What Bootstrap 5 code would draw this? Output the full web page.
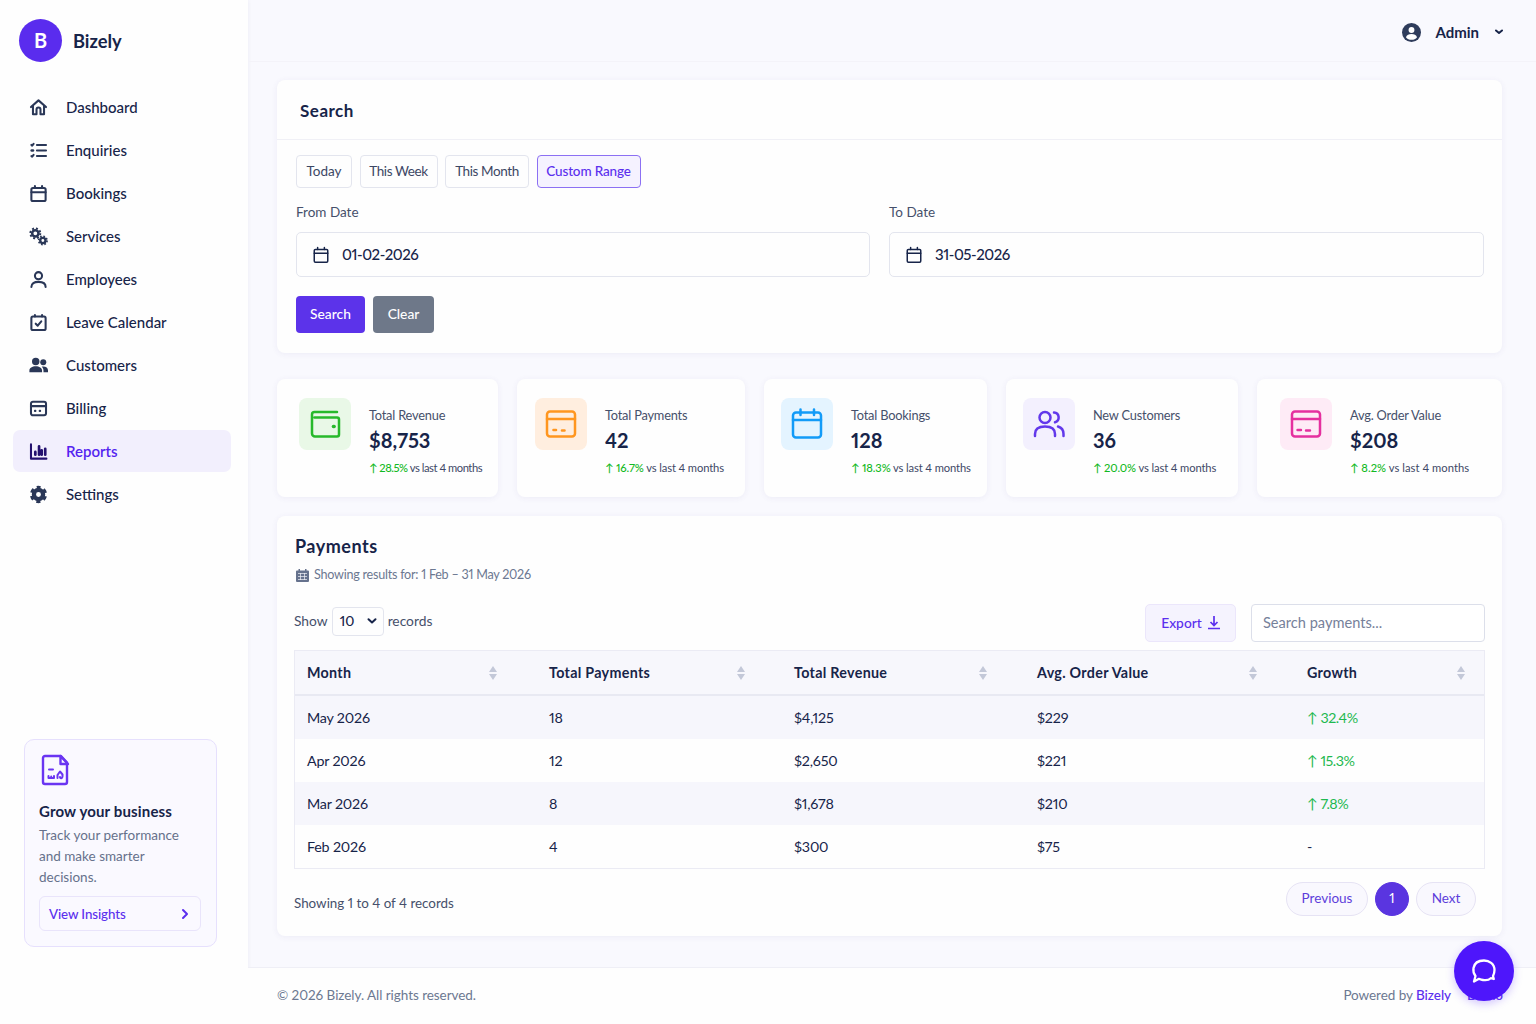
<!DOCTYPE html>
<html lang="en">
<head>
  <meta charset="UTF-8" />
  <meta name="viewport" content="width=device-width, initial-scale=1" />
  <title>Bizely - Reports</title>
  <link href="https://cdn.jsdelivr.net/npm/bootstrap@5.3.0/dist/css/bootstrap.min.css" rel="stylesheet" />
  <style>
    :root {
      --ink: #172449;
      --ink-soft: #46506b;
      --muted: #6c7891;
      --brand: #5b2fee;
      --line: #e3e5ee;
    }
    body {
      background-color: #f9f9fe;
      color: var(--ink);
      font-family: Lato, 'Liberation Sans', sans-serif;
      font-size: 15px;
      font-variant-numeric: proportional-nums;
      line-height: 1.4;
      height: 1024px;
      overflow: hidden;
    }
    svg { display: block; flex: none; }
    .ico { fill: none; stroke: currentColor; stroke-width: 2; stroke-linecap: round; stroke-linejoin: round; }

    /* sidebar */
    .sidebar { width: 248px; background: #fefefe; box-shadow: 0 0 4px rgba(60,50,120,.07); padding: 19px 17px 77px 13px; }
    .brand-logo { width: 43px; height: 43px; background: #5a2cee; font-size: 20px; margin-left: 6px; padding-bottom: 1px; }
    .brand-name { font-size: 18.3px; font-weight: 700; padding-top: 2px; margin-left: 11px; }
    .side-menu { margin-top: 24px; gap: 1px; }
    .side-menu .nav-link { height: 42px; border-radius: 7px; padding: 0 16px; gap: 18px; color: var(--ink); font-weight: 500; }
    .side-menu .nav-link svg { color: #2a3757; stroke-width: 2.6; }
    .side-menu .nav-link.active { background: #f2effd; color: #5424f0; font-weight: 600; }
    .side-menu .nav-link.active svg { color: #24116f; }
    .promo { width: 193px; height: 208px; border: 1px solid #e6e0fd; border-radius: 10px; background: #faf9ff; padding: 13px 15px 13px 14px; margin-left: 11px; }
    .promo > svg { color: #6a35f2; stroke-width: 2.4; }
    .promo-title { font-weight: 700; font-size: 15px; letter-spacing: .15px; margin-top: 14px; line-height: 21px; }
    .promo-text { font-size: 13.5px; line-height: 21px; color: #66718b; margin-top: 3px; }
    .promo-link { height: 35px; border: 1px solid #e9e4fb; border-radius: 6px; padding: 1px 10px 0 9px; color: var(--brand); font-size: 13.3px; letter-spacing: -.1px; font-weight: 500; margin-top: 8px; }

    /* page */
    .topbar { height: 62px; border-bottom: 1px solid #f4f3f9; padding: 3px 33px 0 0; }
    .topbar-user { font-weight: 700; font-size: 15px; margin-left: 14px; }
    .content { padding: 18px 34px 0 29px; }
    .panel { background: #fefefe; border-radius: 8px; box-shadow: 0 1px 6px rgba(70,60,140,.07); }
    .panel-head { height: 60px; border-bottom: 1px solid #f0f0f6; padding: 2px 23px 0; font-size: 17px; font-weight: 700; letter-spacing: .5px; }
    .search-panel { height: 273px; }
    .search-body { padding: 15px 18px 15px 19px; }
    .range-row { gap: 7.5px; }
    .btn-range { height: 33px; padding: 0; width: 56px; border: 1px solid var(--line); border-radius: 4px; font-size: 13.5px; line-height: 31px; color: #3c4764; }
    .btn-range.week { width: 78px; letter-spacing: -.4px; }
    .btn-range.month { width: 84px; letter-spacing: -.4px; }
    .btn-range.active { width: 104px; letter-spacing: -.15px; border-color: #8c70f3; background: #f5f2ff; color: var(--brand); font-weight: 500; }
    .date-row { display: grid; grid-template-columns: 574px 595px; gap: 19px; margin-top: 14px; }
    .date-row label { font-size: 13.5px; line-height: 20px; color: var(--ink-soft); margin-bottom: 10px; }
    .date-field { height: 45px; border: 1px solid var(--line); border-radius: 5px; padding: 0 15px; gap: 12px; font-weight: 500; letter-spacing: -.45px; }
    .action-row { margin-top: 19px; }
    .btn-go { width: 69px; height: 37px; border-radius: 4px; padding: 0; color: #fff; font-size: 13.8px; font-weight: 500; border: 0; background: #5c33ea; }
    .btn-go.alt { width: 61px; background: #6e7889; }

    .stats { display: grid; grid-template-columns: 221px 228px 223px 232px 245px; gap: 19px; margin: 26px 0 19px; }
    .stat { height: 118px; padding-top: 19px; gap: 18px; }
    .stat-icon { width: 52px; height: 52px; border-radius: 8px; flex: none; }
    .stat-icon svg { stroke-width: 2.5; }
    .stat-label { font-size: 12.8px; letter-spacing: -.2px; line-height: 18px; color: var(--ink-soft); margin-top: 8px; }
    .stat-value { font-size: 20px; line-height: 26px; font-weight: 700; margin-top: 3px; }
    .stat-note { font-size: 11.2px; letter-spacing: -.12px; line-height: 16px; color: #3f4967; margin-top: 7px; white-space: nowrap; }
    .stat-note.snug { letter-spacing: -.46px; }
    .stat-note.wide { letter-spacing: .05px; }
    .up { color: #1fb943; }
    .stat-note .up { font-weight: 500; color: #12b923; }

    .pay-panel { height: 420px; padding: 18px 17px 0; }
    .pay-title { font-size: 18px; font-weight: 700; letter-spacing: .5px; line-height: 25px; padding-left: 1px; }
    .pay-sub { font-size: 12.6px; letter-spacing: -.25px; color: var(--muted); line-height: 18px; margin-top: 7px; padding-left: 2px; }
    .pay-sub span { margin-left: 5px; }
    .pay-tools { margin-top: 20px; height: 38px; }
    .len-select { width: 52px; height: 29px; border: 1px solid var(--line); border-radius: 4px; padding: 0 6px 0 7px; color: var(--ink); font-weight: 500; }
    .len-label { font-size: 13.8px; color: var(--ink-soft); }
    .btn-export { width: 91px; height: 38px; border: 1px solid #ebe6fb; border-radius: 5px; background: #f5f3fe; color: var(--brand); font-size: 13.8px; font-weight: 500; margin-right: 15px; }
    .btn-export svg { margin-left: 6px; }
    .pay-search { width: 234px; height: 38px; border: 1px solid #dcdfea; border-radius: 4px; padding: 0 11px 2px; font-size: 14.6px; color: var(--ink); background: #fff; }
    .pay-search::placeholder { color: #76819a; opacity: 1; }
    .pay-table { width: 1191px; table-layout: fixed; margin: 8px 0 0; border: 1px solid #ebebf4; border-collapse: separate; border-spacing: 0; --bs-table-bg: transparent; }
    .pay-table th, .pay-table td { height: 43px; padding: 1px 12px 0; vertical-align: middle; border: 0; color: var(--ink); font-size: 14.3px; letter-spacing: -.2px; line-height: 20px; }
    .pay-table thead th { height: 45px; padding: 0 12px; background: #f7f7fc; border-bottom: 2px solid #e8e9f2; font-weight: 700; letter-spacing: .3px; }
    .pay-table tbody tr:nth-child(odd) td { background: #f6f6fc; }
    .pay-table td.up { color: #1fb950; letter-spacing: -.5px; }
    .pay-foot { margin-top: 13px; }
    .pay-foot .info { font-size: 13.4px; color: var(--ink-soft); padding-top: 8px; }
    .pager { gap: 7px; padding-right: 9px; }
    .pager .page-item .page-link { height: 34px; margin: 0; border: 1px solid #e6e3f4; border-radius: 17px; background: #f9f8fe; color: #5d3edb; font-size: 13.5px; line-height: 31px; padding: 0; text-align: center; }
    .pager .page-item.active .page-link { background: #5a35e0; border-color: #5a35e0; color: #fff; }

    .footer-bar { height: 57px; border-top: 1px solid #efeff6; background: #fefefe; padding: 0 33px 2px 29px; color: var(--muted); font-size: 13.5px; letter-spacing: -.05px; }
    .footer-bar a { color: var(--brand); text-decoration: none; font-weight: 500; }
    .chat-btn { position: fixed; left: 1454px; top: 941px; width: 60px; height: 60px; border-radius: 50%; background: #4e16fb; box-shadow: 0 3px 8px rgba(80,30,250,.25); }
    .chat-btn svg { stroke-width: 2.3; }
  </style>
</head>
<body>
  <div class="d-flex h-100">
    <aside class="sidebar d-flex flex-column flex-shrink-0">
      <div class="d-flex align-items-center">
        <div class="brand-logo rounded-circle text-white fw-bold d-flex align-items-center justify-content-center">B</div>
        <span class="brand-name">Bizely</span>
      </div>
      <nav class="side-menu nav flex-column">
        <a class="nav-link d-flex align-items-center" href="#">
          <svg class="ico" width="19" height="19" viewBox="0 0 24 24"><path d="M2.500 11.500 12 3l9.500 8.500M5 9.800V20.500h4.500v-6a2.500 2.500 0 0 1 5 0v6H19V9.800"/></svg>
          <span>Dashboard</span></a>
        <a class="nav-link d-flex align-items-center" href="#">
          <svg class="ico" width="19" height="19" viewBox="0 0 24 24"><path d="M10 5h11.500M10 12h11.500M10 19h11.500M3 5l1 .8 1.800-2.300M3 19l1 .8 1.800-2.300"/><path d="M3.500 12h1.500" stroke-width="3.400"/></svg>
          <span>Enquiries</span></a>
        <a class="nav-link d-flex align-items-center" href="#">
          <svg class="ico" width="19" height="19" viewBox="0 0 24 24"><rect x="3" y="5" width="18" height="16.500" rx="2"/><path d="M3 10.500h18M7.500 2.500V5M16.500 2.500V5"/></svg>
          <span>Bookings</span></a>
        <a class="nav-link d-flex align-items-center" href="#">
          <svg class="ico" width="19" height="19" viewBox="0 0 24 24"><g stroke-linecap="butt"><circle cx="8" cy="8" r="4" stroke-width="3.200"/><circle cx="8" cy="8" r="6.300" stroke-width="2.400" stroke-dasharray="2.500 2.450"/><circle cx="17.500" cy="17" r="3.300" stroke-width="3"/><circle cx="17.500" cy="17" r="5.300" stroke-width="2.200" stroke-dasharray="2.100 2.060"/></g></svg>
          <span>Services</span></a>
        <a class="nav-link d-flex align-items-center" href="#">
          <svg class="ico" width="19" height="19" viewBox="0 0 24 24"><circle cx="12" cy="7.200" r="4.500"/><path d="M3 21.500c0-4.500 3.500-6.500 9-6.500s9 2 9 6.500"/></svg>
          <span>Employees</span></a>
        <a class="nav-link d-flex align-items-center" href="#">
          <svg class="ico" width="19" height="19" viewBox="0 0 24 24"><rect x="3" y="4.500" width="18" height="17" rx="2"/><path d="M7.500 2.500v2M16.500 2.500v2M8.500 13.500l2.500 2.500 4.500-5.500"/></svg>
          <span>Leave Calendar</span></a>
        <a class="nav-link d-flex align-items-center" href="#">
          <svg width="19" height="19" viewBox="0 0 24 24" fill="currentColor"><circle cx="8.500" cy="7" r="4.700"/><circle cx="18" cy="7.800" r="3.800"/><path d="M.5 20.500v-2C.5 15 4 13 8.500 13S16.500 15 16.500 18.500v2zM18.300 20.500v-2c0-2-.8-3.900-2.200-5 4.800-.7 7.900 1.200 7.900 4.500v2.500z"/></svg>
          <span>Customers</span></a>
        <a class="nav-link d-flex align-items-center" href="#">
          <svg class="ico" width="19" height="19" viewBox="0 0 24 24"><rect x="2.500" y="3.500" width="19" height="17" rx="2.500"/><path d="M2.500 9h19"/><path d="M7.500 15h.6M13.500 15h.6" stroke-width="2.600"/></svg>
          <span>Billing</span></a>
        <a class="nav-link active d-flex align-items-center" href="#">
          <svg class="ico" width="19" height="19" viewBox="0 0 24 24"><path d="M2.500 3v18H22"/><path d="M8 12.500V16M12.700 5.500V16M16 10.500V16M20.500 8.500V16" stroke-width="3.400"/></svg>
          <span>Reports</span></a>
        <a class="nav-link d-flex align-items-center" href="#">
          <svg class="ico" width="19" height="19" viewBox="0 0 24 24"><g stroke-linecap="butt"><circle cx="12" cy="12" r="5.800" stroke-width="5.400"/><circle cx="12" cy="12" r="9.200" stroke-width="3.400" stroke-dasharray="5.200 4.434" stroke-dashoffset="2.600" transform="rotate(-90 12 12)"/></g></svg>
          <span>Settings</span></a>
      </nav>
      <div class="promo mt-auto">
        <svg class="ico" width="32" height="34" viewBox="0 0 32 34"><path d="M22 3H6a2 2 0 0 0-2 2v24a2 2 0 0 0 2 2h20a2 2 0 0 0 2-2V9.500z"/><path d="M21.500 3v8H29z"/><path d="M10 16.500h4M9.500 23v2h5.500v-2M12.200 23.500v1.500M18.500 25v-3l2.500-3.500 2.500 3v2c0 1.800-2.500 2.500-2.500.5" stroke-width="2"/></svg>
        <div class="promo-title">Grow your business</div>
        <div class="promo-text">Track your performance<br>and make smarter<br>decisions.</div>
        <a class="promo-link d-flex align-items-center justify-content-between text-decoration-none" href="#">View Insights
          <svg class="ico" width="10" height="12" viewBox="0 0 10 12"><path d="M3 2l4 4-4 4"/></svg></a>
      </div>
    </aside>

    <div class="d-flex flex-column flex-grow-1">
      <header class="topbar d-flex align-items-center justify-content-end">
        <svg width="19" height="19" viewBox="0 0 24 24"><circle cx="12" cy="12" r="12" fill="#2f3c5b"/><circle cx="12" cy="8.800" r="3.700" fill="#fff"/><path d="M5 18c1-3 3.500-4 7-4s6 1 7 4c-1.800 2.200-4 3.200-7 3.200S6.800 20.200 5 18z" fill="#fff"/></svg>
        <span class="topbar-user">Admin</span>
        <svg class="ico ms-3" width="8" height="6" viewBox="0 0 8 6"><path d="M1 1.500l3 2.500 3-2.500"/></svg>
      </header>

      <main class="content flex-grow-1">
        <section class="panel search-panel">
          <div class="panel-head d-flex align-items-center">Search</div>
          <div class="search-body">
            <div class="range-row d-flex">
              <button class="btn btn-range">Today</button>
              <button class="btn btn-range week">This Week</button>
              <button class="btn btn-range month">This Month</button>
              <button class="btn btn-range active">Custom Range</button>
            </div>
            <div class="date-row">
              <div>
                <label class="d-block">From Date</label>
                <div class="date-field d-flex align-items-center">
                  <svg class="ico" width="18" height="18" viewBox="0 0 24 24"><rect x="3" y="4.500" width="18" height="17" rx="1.500"/><path d="M3 9.500h18M7.500 2v2.500M16.500 2v2.500"/></svg>
                  <span>01-02-2026</span>
                </div>
              </div>
              <div>
                <label class="d-block">To Date</label>
                <div class="date-field d-flex align-items-center">
                  <svg class="ico" width="18" height="18" viewBox="0 0 24 24"><rect x="3" y="4.500" width="18" height="17" rx="1.500"/><path d="M3 9.500h18M7.500 2v2.500M16.500 2v2.500"/></svg>
                  <span>31-05-2026</span>
                </div>
              </div>
            </div>
            <div class="action-row d-flex gap-2">
              <button class="btn btn-go">Search</button>
              <button class="btn btn-go alt">Clear</button>
            </div>
          </div>
        </section>

        <section class="stats">
          <div class="panel stat d-flex" style="padding-left: 22px">
            <div class="stat-icon d-flex align-items-center justify-content-center" style="background: #e9f8e7; color: #27b92b">
              <svg class="ico" width="32" height="32" viewBox="0 0 32 32"><path d="M28 4H5.500A2.500 2.500 0 0 0 3 6.500v19a3 3 0 0 0 3 3h22a2 2 0 0 0 2-2v-15a2 2 0 0 0-2-2H5.500"/><path d="M24.500 18.500h.6" stroke-width="3.600"/></svg>
            </div>
            <div>
              <div class="stat-label">Total Revenue</div>
              <div class="stat-value">$8,753</div>
              <div class="stat-note snug"><span class="up">↑ 28.5%</span> vs last 4 months</div>
            </div>
          </div>
          <div class="panel stat d-flex" style="padding-left: 18px">
            <div class="stat-icon d-flex align-items-center justify-content-center" style="background: #ffeedf; color: #ff961f">
              <svg class="ico" width="32" height="32" viewBox="0 0 32 32"><rect x="2" y="3.500" width="28" height="25" rx="3"/><path d="M2 11h28"/><path d="M8.500 22H11M17 22.500h2.500" stroke-width="2.600"/></svg>
            </div>
            <div>
              <div class="stat-label">Total Payments</div>
              <div class="stat-value">42</div>
              <div class="stat-note"><span class="up">↑ 16.7%</span> vs last 4 months</div>
            </div>
          </div>
          <div class="panel stat d-flex" style="padding-left: 17px">
            <div class="stat-icon d-flex align-items-center justify-content-center" style="background: #e4f4ff; color: #129bf8">
              <svg class="ico" width="32" height="32" viewBox="0 0 32 32"><rect x="2" y="4.500" width="28" height="25" rx="3"/><path d="M2 12h28M9.500 1.500v5.500M23 1.500v5.500"/></svg>
            </div>
            <div>
              <div class="stat-label">Total Bookings</div>
              <div class="stat-value">128</div>
              <div class="stat-note"><span class="up">↑ 18.3%</span> vs last 4 months</div>
            </div>
          </div>
          <div class="panel stat d-flex" style="padding-left: 17px">
            <div class="stat-icon d-flex align-items-center justify-content-center" style="background: #f3f0fe; color: #6238eb">
              <svg class="ico" width="32" height="32" viewBox="0 0 32 32"><circle cx="12" cy="9.500" r="5.500"/><path d="M2 28v-2c0-5 3.500-7.500 10-7.500S22 21 22 26v2M21 4.500a5 5 0 0 1 1 9.800M25 18.500c3.500 1 5.500 3.500 5.500 7.500v2"/></svg>
            </div>
            <div>
              <div class="stat-label">New Customers</div>
              <div class="stat-value">36</div>
              <div class="stat-note"><span class="up">↑ 20.0%</span> vs last 4 months</div>
            </div>
          </div>
          <div class="panel stat d-flex" style="padding-left: 23px">
            <div class="stat-icon d-flex align-items-center justify-content-center" style="background: #feebf6; color: #e5309f">
              <svg class="ico" width="32" height="32" viewBox="0 0 32 32"><rect x="2" y="3.500" width="28" height="25" rx="3"/><path d="M2 11h28"/><path d="M7.500 22H11M16 22.500h4" stroke-width="2.400"/></svg>
            </div>
            <div>
              <div class="stat-label">Avg. Order Value</div>
              <div class="stat-value">$208</div>
              <div class="stat-note wide"><span class="up">↑ 8.2%</span> vs last 4 months</div>
            </div>
          </div>
        </section>

        <section class="panel pay-panel">
          <div class="pay-title">Payments</div>
          <div class="pay-sub d-flex align-items-center">
            <svg width="13" height="13" viewBox="0 0 13 13"><path d="M2.500 0h1.500v1.500h5V0h1.500v1.500H12q1 0 1 1V12q0 1-1 1H1q-1 0-1-1V2.500q0-1 1-1h1.500z" fill="#66728d"/><path d="M2 4.500h9M2 7.500h9M2 10.500h9M4.500 4v7M8.500 4v7" stroke="#f0f2f8" stroke-width=".7"/></svg>
            <span>Showing results for: 1 Feb – 31 May 2026</span>
          </div>
          <div class="pay-tools d-flex justify-content-between align-items-center">
            <div class="len-label d-flex align-items-center pb-1">
              <span>Show</span>
              <div class="len-select d-flex align-items-center justify-content-between mx-1">10
                <svg class="ico" width="10" height="8" viewBox="0 0 10 8"><path d="M1.500 2.200L5 5.500l3.500-3.300"/></svg></div>
              <span>records</span>
            </div>
            <div class="d-flex">
              <button class="btn btn-export d-flex align-items-center justify-content-center p-0">Export
                <svg width="12" height="14" viewBox="0 0 12 14" fill="none" stroke="currentColor" stroke-width="1.700"><path d="M6 0v9M2.500 6L6 9.500 9.500 6M0 12.500h12"/></svg></button>
              <input class="pay-search" type="text" placeholder="Search payments..." />
            </div>
          </div>
          <table class="table pay-table">
            <colgroup><col style="width: 242px" /><col style="width: 245px" /><col style="width: 243px" /><col style="width: 270px" /><col style="width: 189px" /></colgroup>
            <thead>
              <tr>
                <th><div class="d-flex align-items-center justify-content-between" style="padding-right: 28px">Month <svg width="8" height="14" viewBox="0 0 8 14" fill="#c3c8d8"><path d="M4 0l4 6H0zM4 14l4-6H0z"/></svg></div></th>
                <th><div class="d-flex align-items-center justify-content-between" style="padding-right: 25px">Total Payments <svg width="8" height="14" viewBox="0 0 8 14" fill="#c3c8d8"><path d="M4 0l4 6H0zM4 14l4-6H0z"/></svg></div></th>
                <th><div class="d-flex align-items-center justify-content-between" style="padding-right: 26px">Total Revenue <svg width="8" height="14" viewBox="0 0 8 14" fill="#c3c8d8"><path d="M4 0l4 6H0zM4 14l4-6H0z"/></svg></div></th>
                <th><div class="d-flex align-items-center justify-content-between" style="padding-right: 26px">Avg. Order Value <svg width="8" height="14" viewBox="0 0 8 14" fill="#c3c8d8"><path d="M4 0l4 6H0zM4 14l4-6H0z"/></svg></div></th>
                <th><div class="d-flex align-items-center justify-content-between" style="padding-right: 7px">Growth <svg width="8" height="14" viewBox="0 0 8 14" fill="#c3c8d8"><path d="M4 0l4 6H0zM4 14l4-6H0z"/></svg></div></th>
              </tr>
            </thead>
            <tbody>
              <tr><td>May 2026</td><td>18</td><td>$4,125</td><td>$229</td><td class="up">↑ 32.4%</td></tr>
              <tr><td>Apr 2026</td><td>12</td><td>$2,650</td><td>$221</td><td class="up">↑ 15.3%</td></tr>
              <tr><td>Mar 2026</td><td>8</td><td>$1,678</td><td>$210</td><td class="up">↑ 7.8%</td></tr>
              <tr><td>Feb 2026</td><td>4</td><td>$300</td><td>$75</td><td>-</td></tr>
            </tbody>
          </table>
          <div class="pay-foot d-flex justify-content-between align-items-center">
            <div class="info">Showing 1 to 4 of 4 records</div>
            <ul class="pager pagination mb-0">
              <li class="page-item"><a class="page-link" style="width: 82px" href="#">Previous</a></li>
              <li class="page-item active"><a class="page-link" style="width: 34px" href="#">1</a></li>
              <li class="page-item"><a class="page-link" style="width: 60px" href="#">Next</a></li>
            </ul>
          </div>
        </section>
      </main>

      <footer class="footer-bar d-flex align-items-center justify-content-between">
        <span>© 2026 Bizely. All rights reserved.</span>
        <span>Powered by <a href="#">Bizely</a><a class="ms-3" href="#">Demo</a></span>
      </footer>
    </div>
  </div>

  <a class="chat-btn d-flex align-items-center justify-content-center text-white" href="#" aria-label="Chat">
    <svg class="ico" width="26" height="26" viewBox="0 0 26 26"><path d="M4.500 18C2.500 15.500 2 13 2.500 10 3.500 4.500 8 2.500 13 2.500s10.500 3 10.500 9.500c0 3-.8 4.500-1.500 6l.8 3-3-.8C18 22 15 22.500 12 22c-2-.3-3-.8-4-1.200L3 23.500z"/></svg>
  </a>
  <script src="https://cdn.jsdelivr.net/npm/bootstrap@5.3.0/dist/js/bootstrap.bundle.min.js"></script>
</body>
</html>
